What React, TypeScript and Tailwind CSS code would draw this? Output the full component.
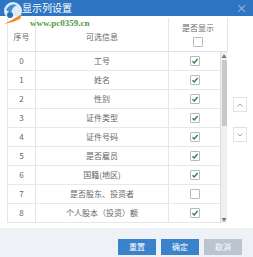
import React from 'react'

const rows = [
  { no: '0', name: '工号', on: true },
  { no: '1', name: '姓名', on: true },
  { no: '2', name: '性别', on: true },
  { no: '3', name: '证件类型', on: true },
  { no: '4', name: '证件号码', on: true },
  { no: '5', name: '是否雇员', on: true },
  { no: '6', name: '国籍(地区)', on: true },
  { no: '7', name: '是否股东、投资者', on: false },
  { no: '8', name: '个人股本（投资）额', on: true },
]

const font = { fontFamily: '"Noto Sans CJK SC", "Noto Sans", sans-serif' }

function Check({ on }: { on: boolean }) {
  return (
    <div className="w-[10px] h-[10px] border border-[#b4bbc3] bg-white flex items-center justify-center rounded-[1px]">
      {on && (
        <svg width="8" height="8" viewBox="0 0 8 8">
          <path d="M1.5 4.3 L3.2 5.9 L6.6 2" stroke="#3a7d45" strokeWidth="1.4" fill="none" />
        </svg>
      )}
    </div>
  )
}

export default function App() {
  return (
    <div className="relative w-[253px] h-[257px] bg-white flex flex-col overflow-hidden" style={font}>
      <div className="h-[16px] bg-[#2e76c3] flex items-center justify-between pl-[22px] pr-[6px] text-white">
        <span className="text-[10px] leading-none">显示列设置</span>
        <span className="text-[11px] leading-none text-[#a9c6e6]">×</span>
      </div>

      <div className="flex pt-[2px] pl-[7px]">
        <div className="w-[220px] flex flex-col border-l border-[#e3e6ea] text-[8px] text-[#666]">
          <div className="h-[34px] flex border-b border-[#dcdfe3] w-[220px]">
            <div className="w-[28px] flex items-center justify-center border-r border-[#e3e6ea] pt-[4px]">序号</div>
            <div className="w-[133px] flex items-center justify-center border-r border-[#e3e6ea] pt-[4px]">可选信息</div>
            <div className="w-[59px] flex flex-col items-center justify-center gap-[3px] border-r border-[#e3e6ea]">
              <span>是否显示</span>
              <Check on={false} />
            </div>
          </div>
          <div className="flex">
            <div className="flex flex-col w-[213px]">
              {rows.map((r) => (
                <div key={r.no} className="h-[19px] flex border-b border-[#e6e8eb]">
                  <div className="w-[28px] flex items-center justify-center border-r border-[#e3e6ea]">{r.no}</div>
                  <div className="w-[133px] flex items-center justify-center border-r border-[#e3e6ea]">{r.name}</div>
                  <div className="flex-1 flex items-center justify-center">
                    <Check on={r.on} />
                  </div>
                </div>
              ))}
            </div>
            <div className="w-[7px] bg-[#f0f0f0] border-l border-[#dcdcdc] flex flex-col items-center">
              <span className="text-[5px] leading-[8px] text-[#777]">▲</span>
              <div className="w-[5px] h-[66px] bg-[#c8c8c8]" />
              <div className="flex-1" />
              <span className="text-[5px] leading-[8px] text-[#777]">▼</span>
            </div>
          </div>
        </div>
        <div className="flex flex-col pl-[6px] pt-[79px] gap-[15px]">
          <div className="w-[14px] h-[15px] border border-[#e0e3e6] flex items-center justify-center">
            <svg width="6" height="4" viewBox="0 0 6 4"><path d="M0.5 3.5 L3 1 L5.5 3.5" stroke="#9aa" fill="none" /></svg>
          </div>
          <div className="w-[14px] h-[15px] border border-[#e0e3e6] flex items-center justify-center">
            <svg width="6" height="4" viewBox="0 0 6 4"><path d="M0.5 0.5 L3 3 L5.5 0.5" stroke="#9aa" fill="none" /></svg>
          </div>
        </div>
      </div>

      <div className="mt-auto h-[29px] bg-[#eef2f6] flex items-end justify-end gap-[5px] pr-[11px] pb-[2px]">
        <button className="w-[38px] h-[16px] bg-[#3b82cc] text-white text-[8px]">重置</button>
        <button className="w-[38px] h-[16px] bg-[#3b82cc] text-white text-[8px]">确定</button>
        <button className="w-[38px] h-[16px] bg-[#b9c5d1] text-white text-[8px]">取消</button>
      </div>

      <div className="absolute left-0 top-0 w-[26px] h-[28px]">
        <svg width="26" height="28" viewBox="0 0 26 28">
          <circle cx="13" cy="11" r="9" fill="#ffffff" opacity="0.85" />
          <path d="M6 10 Q10 3 17 5 Q12 7 11 13 Z" fill="#3a8fd8" />
          <path d="M4 24 Q12 20 22 14 L20 19 Q12 23 4 24 Z" fill="#f08a2a" />
          <circle cx="10" cy="15" r="3" fill="#2a6fb8" />
        </svg>
      </div>
      <div
        className="absolute left-[30px] top-[19px] text-[9px] font-bold text-[#4f9a3e] leading-none"
        style={{ fontFamily: '"Liberation Serif", serif' }}
      >
        www.pc0359.cn
      </div>
    </div>
  )
}
